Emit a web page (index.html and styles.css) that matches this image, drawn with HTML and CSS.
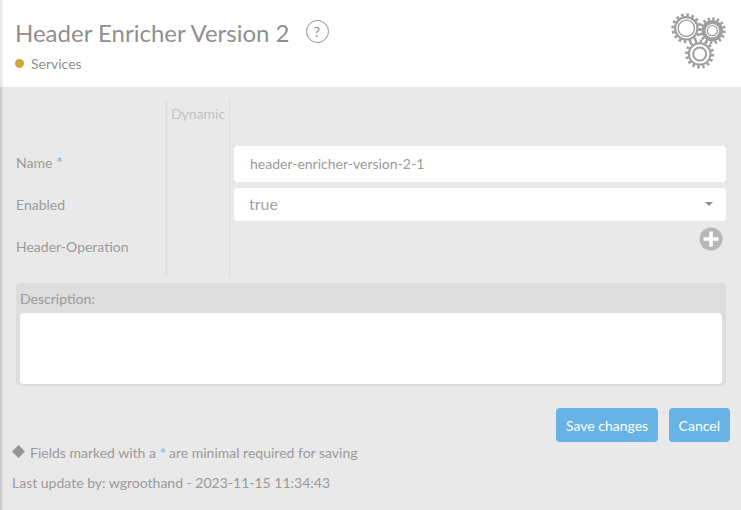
FILE: index.html
```html
<!DOCTYPE html>
<html lang="en">
<head>
<meta charset="utf-8">
<title>Header Enricher Version 2</title>
<link rel="stylesheet" href="styles.css">
</head>
<body>
<header class="header">
  <div class="header-text">
    <div class="title-row">
      <h1 class="title">Header Enricher Version 2</h1>
      <span class="help">?</span>
    </div>
    <div class="category"><span class="dot"></span>Services</div>
  </div>
  <svg class="gears" width="60" height="60" viewBox="0 0 60 60">
    <g fill="none" stroke="#9f9f9f">
      <circle cx="16.3" cy="18.3" r="13.5" stroke-width="3" pathLength="32" stroke-dasharray="1 1"/>
      <circle cx="16.3" cy="18.3" r="11.2" stroke-width="2.2"/>
      <circle cx="16.3" cy="18.3" r="8.2" stroke-width="1.4"/>
      <circle cx="42.3" cy="20.7" r="12" stroke-width="3" pathLength="32" stroke-dasharray="1 1"/>
      <circle cx="42.3" cy="20.7" r="8.8" stroke-width="4"/>
      <circle cx="42.3" cy="20.7" r="5" stroke-width="1.3"/>
      <circle cx="29.7" cy="44" r="13" stroke-width="3" pathLength="32" stroke-dasharray="1 1"/>
      <circle cx="29.7" cy="44" r="10.8" stroke-width="2"/>
      <circle cx="29.7" cy="44" r="6.5" stroke-width="2"/>
    </g>
  </svg>
</header>
<main class="content">
  <form class="form">
    <div class="form-grid">
      <div class="labels">
        <div class="label label-name">Name <span class="req">*</span></div>
        <div class="label label-enabled">Enabled</div>
        <div class="label label-op">Header-Operation</div>
      </div>
      <div class="dynamic">Dynamic</div>
      <div class="fields">
        <div class="input">header-enricher-version-2-1</div>
        <div class="select">true<span class="caret"></span></div>
        <div class="add-row">
          <svg class="add" width="24" height="24" viewBox="0 0 24 24">
            <circle cx="12" cy="12" r="11.5" fill="#b7b7b7"/>
            <path d="M12 4.5v15M4.5 12h15" stroke="#fff" stroke-width="3.6"/>
          </svg>
        </div>
      </div>
    </div>
    <section class="description">
      <div class="description-label">Description:</div>
      <div class="textarea"></div>
    </section>
    <div class="actions">
      <button type="button" class="btn btn-save">Save changes</button>
      <button type="button" class="btn">Cancel</button>
    </div>
  </form>
  <p class="note"><svg class="diamond" width="13" height="13" viewBox="0 0 13 13"><path d="M6.5 0 13 6.5 6.5 13 0 6.5z" fill="#969696"/></svg>Fields marked with a <span class="req req-note">*</span> are minimal required for saving</p>
  <p class="update">Last update by: wgroothand - 2023-11-15 11:34:43</p>
</main>
</body>
</html>
```
FILE: styles.css
```css
* { box-sizing: border-box; }
html, body { height: 100%; }
body {
  margin: 0;
  overflow: hidden;
  font-family: Lato, sans-serif;
  color: #9b9b9b;
  background: linear-gradient(to right, #c4c4c4, #e9e9e9 4px);
}
.header {
  height: 87px;
  padding: 0 11px 0 15px;
  display: flex;
  justify-content: space-between;
  background: linear-gradient(to right, #e2e2e2, #fff 4px);
}
.header-text { padding-top: 19px; }
.title-row { display: flex; align-items: center; height: 28px; }
.title {
  margin: 0;
  font-size: 24px;
  font-weight: 400;
  line-height: 28px;
  color: #8f8f8f;
}
.help {
  width: 23px;
  height: 23px;
  margin: -3px 0 0 16px;
  border: 1px solid #8f8f8f;
  border-radius: 50%;
  font-size: 14px;
  line-height: 21px;
  text-align: center;
  color: #8f8f8f;
}
.category {
  display: flex;
  align-items: center;
  margin-top: 8px;
  font-size: 14px;
  line-height: 17px;
  color: #8f8f8f;
}
.dot {
  width: 9px;
  height: 9px;
  margin: 0 7px 0 0;
  border-radius: 50%;
  background: #d3a33d;
}
.gears { margin-top: 10px; }
.content { padding: 13px 11px 0 12px; }
.form { padding-left: 4px; }
.form-grid {
  display: flex;
  height: 177px;
}
.labels {
  width: 150px;
  padding-top: 54px;
  font-size: 14px;
  color: #9b9b9b;
}
.label { line-height: 17px; }
.label-enabled { margin-top: 25px; }
.label-op { margin-top: 25px; }
.req { color: #6cb8ea; font-size: 16px; line-height: 14px; }
.dynamic {
  width: 64px;
  padding: 5px 0 0 4px;
  border-left: 1px solid #dcdcdc;
  border-right: 1px solid #dcdcdc;
  font-size: 14px;
  line-height: 17px;
  color: #c2c2c2;
}
.fields {
  width: 492px;
  margin-left: 4px;
  padding-top: 46px;
}
.input, .select {
  position: relative;
  background: #fff;
  border-radius: 4px;
  color: #9b9b9b;
}
.input {
  height: 36px;
  padding-left: 16px;
  font-size: 14px;
  line-height: 36px;
}
.select {
  height: 33px;
  margin-top: 6px;
  padding-left: 15px;
  font-size: 16px;
  line-height: 31px;
  color: #a3a3a3;
}
.caret {
  position: absolute;
  right: 13px;
  top: 14px;
  border-top: 4px solid #8f8f8f;
  border-left: 4px solid transparent;
  border-right: 4px solid transparent;
}
.add-row {
  display: flex;
  justify-content: flex-end;
  padding: 6px 3px 0 0;
}
.add { display: block; }
.description {
  width: 710px;
  height: 103px;
  margin-top: 6px;
  padding: 0 4px;
  background: #ddd;
  border-radius: 4px;
}
.description-label {
  height: 30px;
  font-size: 14px;
  line-height: 32px;
  color: #9b9b9b;
}
.textarea {
  height: 71px;
  background: #fff;
  border-radius: 4px;
}
.actions {
  display: flex;
  justify-content: flex-end;
  gap: 11px;
  margin-top: 22px;
}
.btn {
  height: 34px;
  padding: 0 10px;
  border: 0;
  border-radius: 4px;
  font-family: inherit;
  font-size: 14px;
  color: #fff;
  background: #67b3e5;
}
.btn-save { padding: 0 9.5px; }
.note {
  display: flex;
  align-items: center;
  margin: 2px 0 0;
  font-size: 14px;
  line-height: 17px;
  white-space: pre-wrap;
}
.req-note { line-height: 17px; letter-spacing: -1px; }
.diamond { margin: -3px 5px 0 0; }
.update {
  margin: 13px 0 0;
  font-size: 14px;
  line-height: 17px;
}
```
